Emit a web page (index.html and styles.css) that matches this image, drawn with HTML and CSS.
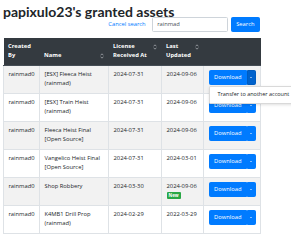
FILE: index.html
```html
<!DOCTYPE html>
<html lang="en">
<head>
<meta charset="utf-8">
<title>Granted assets</title>
<link rel="stylesheet" href="styles.css">
</head>
<body>
<div class="page">
  <h1 class="title">papixulo23's granted assets</h1>
  <form class="search">
    <a class="cancel" href="#">Cancel search</a>
    <input class="search-input" type="text" value="rainmad">
    <button class="btn" type="button">Search</button>
  </form>
  <table class="assets">
    <thead>
      <tr>
        <th class="c-by">Created By</th>
        <th class="c-name"><span class="sort"><svg viewBox="0 0 4 6" width="4" height="6"><path d="M0.6 2.3 L2 0.8 L3.4 2.3 M0.6 3.7 L2 5.2 L3.4 3.7" fill="none" stroke="#c9cdd1" stroke-width="0.6"/></svg></span>Name</th>
        <th class="c-rec"><span class="sort"><svg viewBox="0 0 4 6" width="4" height="6"><path d="M0.6 2.3 L2 0.8 L3.4 2.3 M0.6 3.7 L2 5.2 L3.4 3.7" fill="none" stroke="#c9cdd1" stroke-width="0.6"/></svg></span>License Received At</th>
        <th class="c-upd"><span class="sort"><svg viewBox="0 0 4 6" width="4" height="6"><path d="M0.6 2.3 L2 0.8 L3.4 2.3 M0.6 3.7 L2 5.2 L3.4 3.7" fill="none" stroke="#c9cdd1" stroke-width="0.6"/></svg></span>Last Updated</th>
        <th class="c-act"></th>
      </tr>
    </thead>
    <tbody>
      <tr>
        <td>rainmad0</td>
        <td>[ESX] Fleeca Heist (rainmad)</td>
        <td>2024-07-31</td>
        <td>2024-09-06</td>
        <td>
          <div class="btn-group">
            <button class="btn" type="button">Download</button><button class="btn toggle open" type="button"><span class="caret"></span></button>
            <div class="menu"><a class="menu-item" href="#">Transfer to another account</a></div>
          </div>
        </td>
      </tr>
      <tr>
        <td>rainmad0</td>
        <td>[ESX] Train Heist (rainmad)</td>
        <td>2024-07-31</td>
        <td>2024-09-06</td>
        <td><div class="btn-group"><button class="btn" type="button">Download</button><button class="btn toggle" type="button"><span class="caret"></span></button></div></td>
      </tr>
      <tr>
        <td>rainmad0</td>
        <td>Fleeca Heist Final [Open Source]</td>
        <td>2024-07-31</td>
        <td>2024-09-06</td>
        <td><div class="btn-group"><button class="btn" type="button">Download</button><button class="btn toggle" type="button"><span class="caret"></span></button></div></td>
      </tr>
      <tr>
        <td>rainmad0</td>
        <td>Vangelico Heist Final [Open Source]</td>
        <td>2024-07-31</td>
        <td>2024-03-01</td>
        <td><div class="btn-group"><button class="btn" type="button">Download</button><button class="btn toggle" type="button"><span class="caret"></span></button></div></td>
      </tr>
      <tr>
        <td>rainmad0</td>
        <td>Shop Robbery</td>
        <td>2024-03-30</td>
        <td>2024-09-06<br><span class="badge">New</span></td>
        <td><div class="btn-group"><button class="btn" type="button">Download</button><button class="btn toggle" type="button"><span class="caret"></span></button></div></td>
      </tr>
      <tr>
        <td>rainmad0</td>
        <td>K4MB1 Drill Prop (rainmad)</td>
        <td>2024-02-29</td>
        <td>2022-03-29</td>
        <td><div class="btn-group"><button class="btn" type="button">Download</button><button class="btn toggle" type="button"><span class="caret"></span></button></div></td>
      </tr>
    </tbody>
  </table>
</div>
</body>
</html>
```
FILE: styles.css
```css
html, body {
  margin: 0;
  padding: 0;
  overflow: hidden;
  background: #fff;
}
body {
  font-family: "Open Sans", "Noto Sans", sans-serif;
  color: #212529;
}
.page {
  width: 257px;
  padding: 0 3px;
}
.title {
  margin: 0;
  font-family: Lato, Roboto, sans-serif;
  font-size: 14px;
  font-weight: 700;
  line-height: 23px;
  height: 17px;
  color: #212529;
  white-space: nowrap;
}
.search {
  display: flex;
  justify-content: flex-end;
  align-items: center;
  margin: 0 0 6px;
}
.cancel {
  color: #007bff;
  text-decoration: none;
  font-size: 5.8px;
  line-height: 9px;
  margin-right: 6px;
}
.search-input {
  box-sizing: border-box;
  flex: 0 0 76px;
  width: 76px;
  height: 14.5px;
  margin-right: 3px;
  padding: 0 4.5px;
  border: 0.5px solid #ced4da;
  border-radius: 1.5px;
  font-family: inherit;
  font-size: 5.8px;
  color: #495057;
  outline: none;
}
.btn {
  box-sizing: border-box;
  height: 14.5px;
  padding: 0 4.5px;
  border: 0.4px solid #007bff;
  border-radius: 1.5px;
  background: #007bff;
  color: #fff;
  font-family: inherit;
  font-size: 5.8px;
  line-height: 9px;
  cursor: pointer;
}
.assets {
  width: 257px;
  table-layout: fixed;
  border-collapse: collapse;
  font-size: 5.8px;
  line-height: 9px;
}
.assets th, .assets td {
  padding: 4.5px;
  text-align: left;
}
.assets th {
  background: #343a40;
  color: #fff;
  font-weight: 700;
  vertical-align: bottom;
  border-bottom: 0.75px solid #454d55;
}
.assets td {
  vertical-align: top;
  border: 0.4px solid #dee2e6;
}
.assets tbody tr:nth-child(odd) td {
  background: #f2f2f2;
}
.c-by { width: 27px; }
.c-name { width: 60px; }
.c-rec { width: 44px; }
.c-upd { width: 33px; }
.c-act { width: 48px; }
.sort {
  float: right;
  margin-top: 1.5px;
  line-height: 0;
}
.btn-group {
  position: relative;
  display: inline-flex;
}
.btn-group .btn:first-child {
  width: 38px;
  border-radius: 1.5px 0 0 1.5px;
}
.toggle {
  width: 9px;
  padding: 0;
  border-radius: 0 1.5px 1.5px 0;
  display: flex;
  align-items: center;
  justify-content: center;
}
.toggle.open {
  background: #0062cc;
  border-color: #005cbf;
}
.caret {
  width: 0;
  height: 0;
  border-top: 1.8px solid #fff;
  border-left: 1.6px solid transparent;
  border-right: 1.6px solid transparent;
}
.menu {
  position: absolute;
  top: 100%;
  left: 0;
  margin-top: 1px;
  padding: 2px 0;
  background: #fff;
  border: 0.4px solid rgba(0,0,0,.15);
  border-radius: 1.5px;
  box-shadow: 0 1px 3px rgba(0,0,0,.12);
  z-index: 5;
  white-space: nowrap;
}
.menu-item {
  display: block;
  padding: 1.5px 8px;
  color: #212529;
  text-decoration: none;
  font-size: 5.5px;
  line-height: 9px;
}
.badge {
  display: inline-block;
  padding: 1px 2px;
  background: #28a745;
  color: #fff;
  font-size: 4.5px;
  font-weight: 700;
  line-height: 1;
  border-radius: 1px;
  vertical-align: middle;
}
```
